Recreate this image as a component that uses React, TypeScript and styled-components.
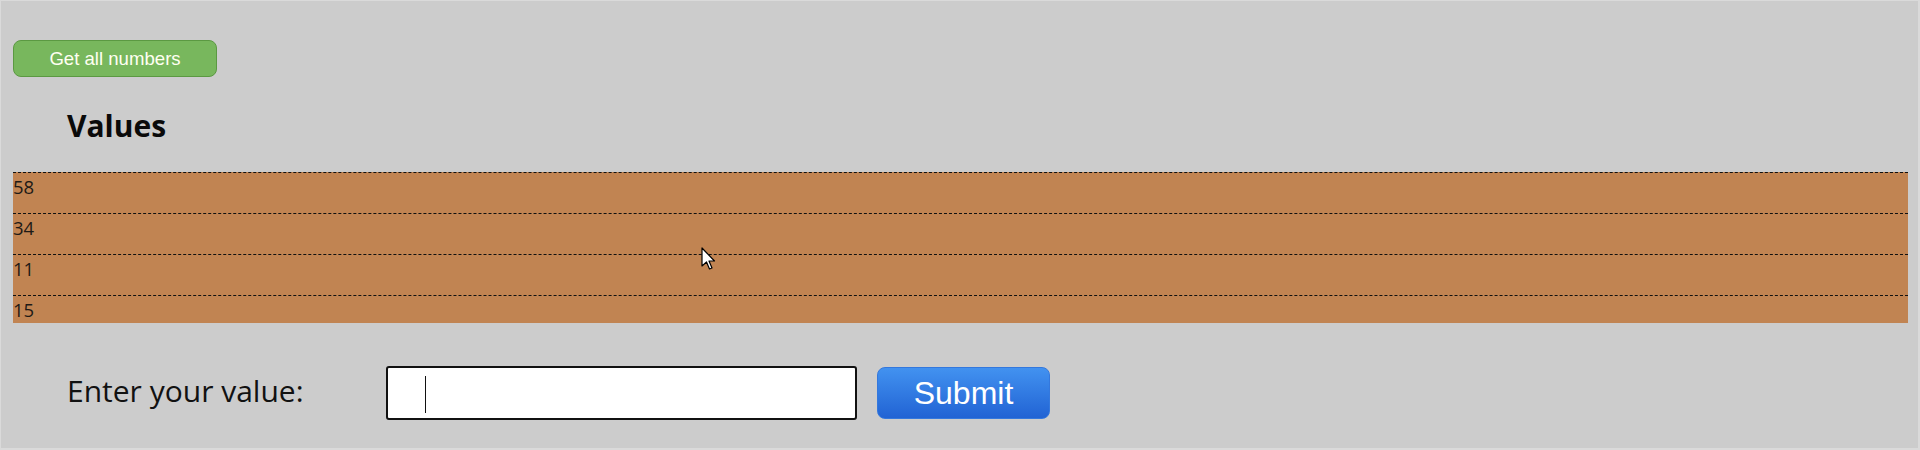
import React from "react";
import styled, { createGlobalStyle } from "styled-components";

const Global = createGlobalStyle`
  html, body { margin: 0; padding: 0; background: #cccccc; }
  body { font-family: "Open Sans", "Noto Sans", sans-serif; color: #111; }
  * { box-sizing: border-box; }
`;

const Page = styled.div`
  position: relative;
  min-height: 450px;
  border-style: solid;
  border-color: #dadada;
  border-width: 1px 2px 2px 1px;
  padding: 39px 10px 0 12px;
  display: flex;
  flex-direction: column;
`;

const FetchButton = styled.button`
  align-self: flex-start;
  width: 204px;
  height: 37px;
  background: #78b75d;
  border: 1px solid #5b9942;
  border-radius: 8px;
  color: #fffff2;
  font-family: "Liberation Sans", Arial, sans-serif;
  font-size: 18.6px;
  padding: 0;
  cursor: pointer;
`;

const Heading = styled.h2`
  margin: 28px 0 0 54px;
  font-size: 30px;
  font-weight: 700;
  line-height: 41px;
  color: #0a0a0a;
`;

const List = styled.ul`
  list-style: none;
  margin: 26px 0 0 0;
  padding: 0;
  background: #c18452;
`;

const Row = styled.li`
  border-top: 1px dashed #111;
  font-size: 18.5px;
  line-height: 27px;
  color: #1e1a16;
  padding-bottom: 13px;
  &:last-child { padding-bottom: 0; }
`;

const Form = styled.form`
  display: flex;
  align-items: center;
  margin: 43px 0 0 54px;
`;

const Label = styled.label`
  width: 319px;
  font-size: 30px;
  line-height: 41px;
  padding-bottom: 5px;
  color: #111;
`;

const InputWrap = styled.div`
  position: relative;
  display: flex;
`;

const Input = styled.input`
  width: 471px;
  height: 54px;
  border: 2px solid #111;
  border-radius: 3px;
  background: #fff;
  padding: 0 0 0 37px;
  font-size: 30px;
  font-family: "Open Sans", sans-serif;
  outline: none;
`;

const Caret = styled.span`
  position: absolute;
  left: 39px;
  top: 10px;
  width: 1px;
  height: 37px;
  background: #111;
  pointer-events: none;
`;

const Submit = styled.button`
  margin-left: 20px;
  width: 173px;
  height: 52px;
  border: 1px solid #3478dd;
  border-radius: 8px;
  background: linear-gradient(#4292f0, #2163d4);
  color: #fff;
  font-family: "Liberation Sans", Arial, sans-serif;
  font-size: 32px;
  padding: 0;
  cursor: pointer;
`;

const Cursor = styled.svg`
  position: absolute;
  left: 700px;
  top: 246px;
  pointer-events: none;
`;

const values = [58, 34, 11, 15];

export default function App() {
  return (
    <>
      <Global />
      <Page>
        <FetchButton type="button">Get all numbers</FetchButton>
        <Heading>Values</Heading>
        <List>
          {values.map((v, i) => (
            <Row key={i}>{v}</Row>
          ))}
        </List>
        <Form onSubmit={(e) => e.preventDefault()}>
          <Label htmlFor="val">Enter your value:</Label>
          <InputWrap>
            <Input id="val" type="text" />
            <Caret />
          </InputWrap>
          <Submit type="submit">Submit</Submit>
        </Form>
        <Cursor width="16" height="24" viewBox="0 0 16 24">
          <path
            d="M1 1 L1 19 L5.5 15 L8.5 22 L11 21 L8 14 L13.5 14 Z"
            fill="#fff"
            stroke="#000"
            strokeWidth="1.2"
            strokeLinejoin="round"
          />
        </Cursor>
      </Page>
    </>
  );
}
